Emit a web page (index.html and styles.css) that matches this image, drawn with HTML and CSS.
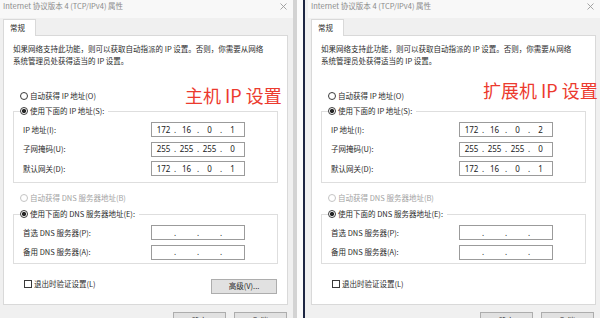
FILE: index.html
```html
<!DOCTYPE html>
<html lang="zh-CN">
<head>
<meta charset="utf-8">
<title>IPv4 属性</title>
<link rel="stylesheet" href="styles.css">
</head>
<body>
<div class="screen">
  <section class="dlg">
    <header class="titlebar">
      <span class="title">Internet 协议版本 4 (TCP/IPv4) 属性</span>
      <svg class="close" width="7" height="7" viewBox="0 0 7 7"><path d="M0.5 0.5L6.5 6.5M6.5 0.5L0.5 6.5" stroke="#9a9a9a" stroke-width="0.9" fill="none"/></svg>
    </header>
    <div class="tabs"><span class="tab">常规</span></div>
    <div class="panel">
      <p class="desc">如果网络支持此功能，则可以获取自动指派的 IP 设置。否则，你需要从网络<br>系统管理员处获得适当的 IP 设置。</p>
      <div class="opt opt-ip"><span class="radio"></span>自动获得 IP 地址(O)</div>
      <fieldset class="group group-ip">
        <legend class="lg-ip"><span class="radio on"></span>使用下面的 IP 地址(S):</legend>
        <div class="row"><span class="lbl">IP 地址(I):</span><div class="ip"><span class="seg">172</span><span class="dot">.</span><span class="seg">16</span><span class="dot">.</span><span class="seg">0</span><span class="dot">.</span><span class="seg">1</span></div></div>
        <div class="row"><span class="lbl">子网掩码(U):</span><div class="ip"><span class="seg">255</span><span class="dot">.</span><span class="seg">255</span><span class="dot">.</span><span class="seg">255</span><span class="dot">.</span><span class="seg">0</span></div></div>
        <div class="row"><span class="lbl">默认网关(D):</span><div class="ip"><span class="seg">172</span><span class="dot">.</span><span class="seg">16</span><span class="dot">.</span><span class="seg">0</span><span class="dot">.</span><span class="seg">1</span></div></div>
      </fieldset>
      <div class="opt opt-dns disabled"><span class="radio"></span>自动获得 DNS 服务器地址(B)</div>
      <fieldset class="group group-dns">
        <legend class="lg-dns"><span class="radio on"></span>使用下面的 DNS 服务器地址(E):</legend>
        <div class="row"><span class="lbl">首选 DNS 服务器(P):</span><div class="ip"><span class="seg"></span><span class="dot">.</span><span class="seg"></span><span class="dot">.</span><span class="seg"></span><span class="dot">.</span><span class="seg"></span></div></div>
        <div class="row"><span class="lbl">备用 DNS 服务器(A):</span><div class="ip"><span class="seg"></span><span class="dot">.</span><span class="seg"></span><span class="dot">.</span><span class="seg"></span><span class="dot">.</span><span class="seg"></span></div></div>
      </fieldset>
      <div class="bottom">
        <div class="check"><span class="box"></span>退出时验证设置(L)</div>
        <span class="btn adv">高级(V)...</span>
      </div>
    </div>
    <div class="footer"><span class="btn fbtn">确定</span><span class="btn fbtn">取消</span></div>
    <div class="note note-left">主机 IP 设置</div>
  </section>

  <div class="divider"></div>

  <section class="dlg dlg-right">
    <header class="titlebar">
      <span class="title">Internet 协议版本 4 (TCP/IPv4) 属性</span>
      <svg class="close" width="7" height="7" viewBox="0 0 7 7"><path d="M0.5 0.5L6.5 6.5M6.5 0.5L0.5 6.5" stroke="#9a9a9a" stroke-width="0.9" fill="none"/></svg>
    </header>
    <div class="tabs"><span class="tab">常规</span></div>
    <div class="panel">
      <p class="desc">如果网络支持此功能，则可以获取自动指派的 IP 设置。否则，你需要从网络<br>系统管理员处获得适当的 IP 设置。</p>
      <div class="opt opt-ip"><span class="radio"></span>自动获得 IP 地址(O)</div>
      <fieldset class="group group-ip">
        <legend class="lg-ip lg-ip-wide"><span class="radio on"></span>使用下面的 IP 地址(S):</legend>
        <div class="row"><span class="lbl">IP 地址(I):</span><div class="ip"><span class="seg">172</span><span class="dot">.</span><span class="seg">16</span><span class="dot">.</span><span class="seg">0</span><span class="dot">.</span><span class="seg">2</span></div></div>
        <div class="row"><span class="lbl">子网掩码(U):</span><div class="ip"><span class="seg">255</span><span class="dot">.</span><span class="seg">255</span><span class="dot">.</span><span class="seg">255</span><span class="dot">.</span><span class="seg">0</span></div></div>
        <div class="row"><span class="lbl">默认网关(D):</span><div class="ip"><span class="seg">172</span><span class="dot">.</span><span class="seg">16</span><span class="dot">.</span><span class="seg">0</span><span class="dot">.</span><span class="seg">1</span></div></div>
      </fieldset>
      <div class="opt opt-dns disabled"><span class="radio"></span>自动获得 DNS 服务器地址(B)</div>
      <fieldset class="group group-dns">
        <legend class="lg-dns"><span class="radio on"></span>使用下面的 DNS 服务器地址(E):</legend>
        <div class="row"><span class="lbl">首选 DNS 服务器(P):</span><div class="ip"><span class="seg"></span><span class="dot">.</span><span class="seg"></span><span class="dot">.</span><span class="seg"></span><span class="dot">.</span><span class="seg"></span></div></div>
        <div class="row"><span class="lbl">备用 DNS 服务器(A):</span><div class="ip"><span class="seg"></span><span class="dot">.</span><span class="seg"></span><span class="dot">.</span><span class="seg"></span><span class="dot">.</span><span class="seg"></span></div></div>
      </fieldset>
      <div class="bottom">
        <div class="check"><span class="box"></span>退出时验证设置(L)</div>
      </div>
    </div>
    <div class="footer"><span class="btn fbtn">确定</span><span class="btn fbtn">取消</span></div>
    <div class="note note-right">扩展机 IP 设置</div>
  </section>
</div>
</body>
</html>
```

FILE: styles.css
```css
* { box-sizing: border-box; margin: 0; padding: 0; }

html, body {
  width: 600px;
  height: 318px;
  overflow: hidden;
}

body {
  font-family: "Noto Sans CJK SC", "Noto Sans", sans-serif;
  font-size: 7.5px;
  line-height: 12px;
  color: #2b2b2b;
  background: #f0f0f0;
}

.screen {
  display: flex;
  width: 600px;
  height: 318px;
  overflow: hidden;
}

.dlg {
  position: relative;
  flex: none;
  width: 293px;
  height: 318px;
  background: #f0f0f0;
  overflow: hidden;
}

.dlg-right {
  width: 295px;
  padding-left: 3px;
}

.divider {
  flex: none;
  width: 12px;
  height: 318px;
  background: #fbfbfb;
  border-left: 4px solid #d3d3d3;
  border-right: 2px solid #1d2642;
}

.titlebar {
  display: flex;
  justify-content: space-between;
  align-items: flex-start;
  height: 18px;
  padding: 0 6px 0 3px;
  background: #f8f8f8;
}

.title {
  color: #8a8a8a;
  line-height: 12px;
}

.close {
  margin-top: 3px;
}

.tabs {
  display: flex;
  height: 17px;
  padding: 1px 0 0 3px;
}

.tab {
  position: relative;
  z-index: 1;
  width: 33px;
  height: 17px;
  margin-bottom: -1px;
  padding-left: 6px;
  line-height: 15px;
  background: #fff;
  border: 1px solid #d9d9d9;
  border-bottom: none;
}

.panel {
  margin-left: 3px;
  width: 285px;
  height: 270px;
  padding: 7px 9px 0;
  background: #fff;
  border: 1px solid #d9d9d9;
}

.desc {
  line-height: 12px;
}

.opt {
  display: flex;
  align-items: center;
  height: 12px;
  padding-left: 7px;
}

.opt-ip { margin-top: 23px; }
.opt-dns { margin-top: 9px; }

.disabled { color: #a3a3a3; }

.radio {
  display: inline-block;
  width: 8px;
  height: 8px;
  margin-right: 2px;
  border: 1px solid #3a3a3a;
  border-radius: 50%;
  background: #fff;
  vertical-align: -1px;
}

.radio.on {
  background: radial-gradient(circle, #262626 0 1.8px, #fff 2.4px);
}

.disabled .radio {
  border-color: #c4c4c4;
}

.group {
  width: 265px;
  border: 1px solid #dedede;
  padding: 0 0 6px;
}

.group-ip { margin-top: 3px; }
.group-dns { margin-top: 4px; padding-bottom: 3px; }

.group legend {
  margin-left: 6px;
  padding: 0 4px 0 0;
  line-height: 12px;
  height: 12px;
  background: #fff;
}

.lg-ip-wide { padding-right: 28px; }
.lg-dns { padding-right: 10px; }

.row {
  display: flex;
  align-items: center;
  height: 15px;
  padding-left: 9px;
  margin-top: 4.5px;
}

.row:first-of-type { margin-top: 5px; }

.lbl {
  flex: none;
  width: 128px;
}

.ip {
  display: flex;
  align-items: center;
  width: 94px;
  height: 15px;
  padding-left: 3px;
  background: #fff;
  border: 1px solid #9b9b9b;
  font-family: "Noto Sans", sans-serif;
  font-size: 8px;
  color: #222;
}

.seg {
  width: 17px;
  text-align: center;
}

.dot {
  width: 6px;
  text-align: center;
}

.bottom {
  display: flex;
  justify-content: space-between;
  align-items: flex-start;
  margin-top: 14px;
}

.check {
  display: flex;
  align-items: center;
  height: 12px;
  padding-left: 11px;
}

.box {
  display: inline-block;
  width: 8px;
  height: 8px;
  margin-right: 2px;
  border: 1px solid #3a3a3a;
  background: #fff;
}

.btn {
  display: flex;
  justify-content: center;
  align-items: center;
  background: #e1e1e1;
  border: 1px solid #adadad;
}

.adv {
  width: 66px;
  height: 15px;
  margin-top: 1px;
  margin-right: 1px;
}

.footer {
  display: flex;
  justify-content: flex-end;
  gap: 8px;
  padding: 7px 6px 0 0;
}

.fbtn {
  width: 53px;
  height: 16px;
  align-items: flex-start;
  padding-top: 2px;
}

.note {
  position: absolute;
  font-size: 18px;
  line-height: 18px;
  color: #ec3a2e;
  white-space: nowrap;
}

.note-left { left: 185px; top: 86px; }
.note-right { left: 178px; top: 81px; }
```
